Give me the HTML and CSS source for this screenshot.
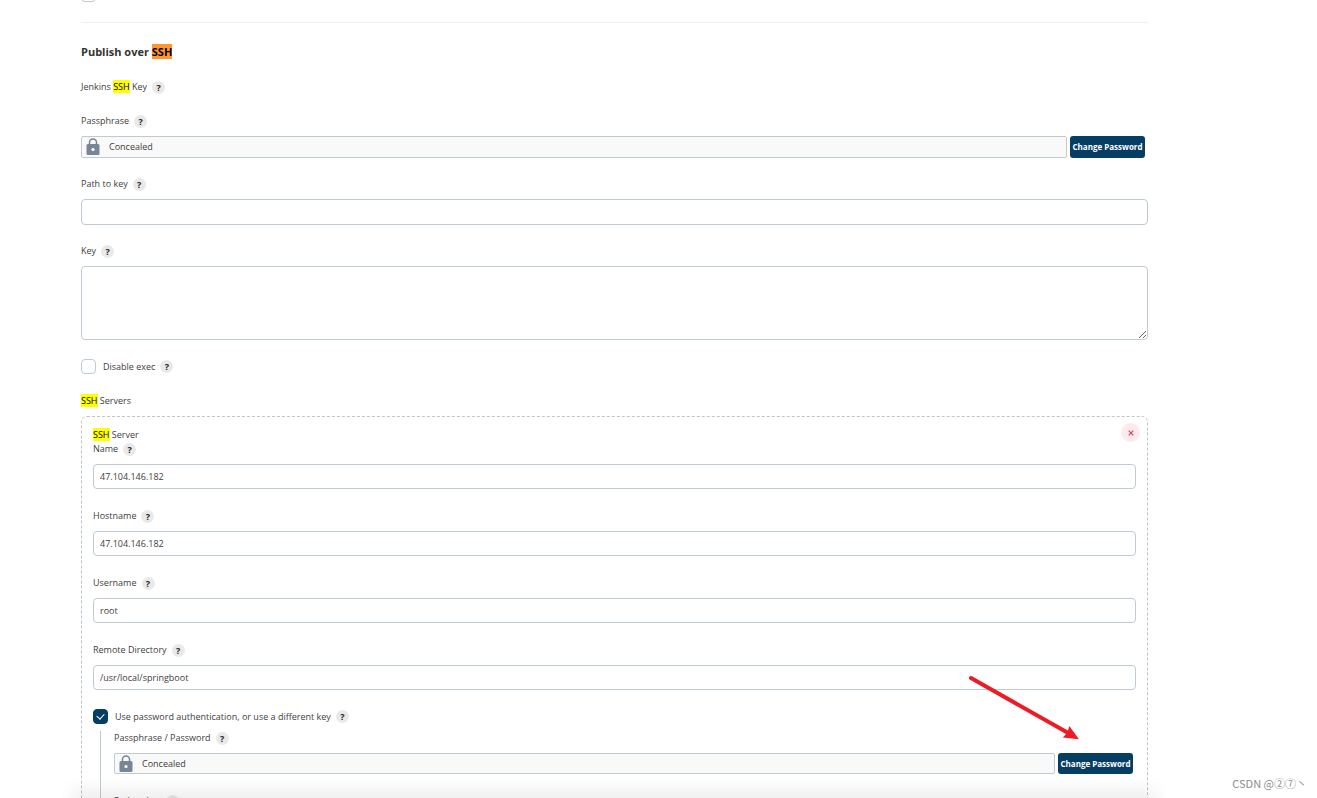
FILE: index.html
```html
<!DOCTYPE html>
<html lang="en">
<head>
<meta charset="utf-8">
<title>Configure System</title>
<link rel="stylesheet" href="styles.css">
</head>
<body>
<svg class="defs" aria-hidden="true">
  <symbol id="lock" viewBox="0 0 14 18">
    <path d="M3.5 8V4.6a3.5 3.5 0 0 1 7 0V8" fill="none" stroke="#788594" stroke-width="1.5"/>
    <rect x="0.5" y="6" width="13" height="11" rx="1.5" fill="#788594"/>
    <circle cx="7" cy="11.5" r="1.6" fill="#fff"/>
  </symbol>
</svg>
<main class="page">
  <form class="config">
    <div class="previous"><input class="check" type="checkbox" aria-label="Previous option"></div>
    <section class="section">
      <h2 class="title">Publish over <mark class="current">SSH</mark></h2>
      <div class="label-row key-title"><span>Jenkins <mark>SSH</mark> Key</span><button type="button" class="help">?</button></div>

      <div class="field">
        <div class="label-row"><span>Passphrase</span><button type="button" class="help">?</button></div>
        <div class="secret">
          <div class="secret-box"><svg class="lock"><use href="#lock"/></svg><span>Concealed</span></div>
          <button type="button" class="change">Change Password</button>
        </div>
      </div>

      <div class="field close">
        <div class="label-row"><label for="path">Path to key</label><button type="button" class="help">?</button></div>
        <input class="text tall" id="path" type="text">
      </div>

      <div class="field close">
        <div class="label-row"><label for="key">Key</label><button type="button" class="help">?</button></div>
        <textarea class="text area" id="key"></textarea>
      </div>

      <div class="check-row">
        <input class="check" id="noexec" type="checkbox"><label for="noexec">Disable exec</label><button type="button" class="help">?</button>
      </div>

      <div class="label-row servers-title"><span><mark>SSH</mark> Servers</span></div>
      <div class="server">
        <button type="button" class="remove" aria-label="Delete"><svg viewBox="0 0 6 6"><path d="M.7.7l4.6 4.6M5.3.7L.7 5.3" stroke="#e0405a" stroke-width="1.2"/></svg></button>
        <div class="label-row"><span><mark>SSH</mark> Server</span></div>
        <div class="field compact">
          <div class="label-row"><label for="name">Name</label><button type="button" class="help">?</button></div>
          <input class="text" id="name" type="text" value="47.104.146.182">
        </div>
        <div class="field">
          <div class="label-row"><label for="host">Hostname</label><button type="button" class="help">?</button></div>
          <input class="text" id="host" type="text" value="47.104.146.182">
        </div>
        <div class="field">
          <div class="label-row"><label for="user">Username</label><button type="button" class="help">?</button></div>
          <input class="text" id="user" type="text" value="root">
        </div>
        <div class="field">
          <div class="label-row"><label for="dir">Remote Directory</label><button type="button" class="help">?</button></div>
          <input class="text" id="dir" type="text" value="/usr/local/springboot">
        </div>
        <div class="check-row">
          <input class="check" id="auth" type="checkbox" checked><label for="auth">Use password authentication, or use a different key</label><button type="button" class="help">?</button>
        </div>
        <div class="nested">
          <div class="label-row"><span>Passphrase / Password</span><button type="button" class="help">?</button></div>
          <div class="secret">
            <div class="secret-box"><svg class="lock"><use href="#lock"/></svg><span>Concealed</span></div>
            <button type="button" class="change">Change Password</button>
          </div>
          <div class="field">
            <div class="label-row"><label for="path2">Path to key</label><button type="button" class="help">?</button></div>
            <input class="text" id="path2" type="text">
          </div>
        </div>
      </div>
    </section>
  </form>
  <div class="bottom-shade"></div>
  <svg class="arrow" viewBox="0 0 112 66" aria-hidden="true">
    <path d="M3 3L102 59" stroke="#ed1c24" stroke-width="4" stroke-linecap="round"/>
    <path d="M111 64.3L101.3 51L99.5 57.5L94.8 62.5Z" fill="#ed1c24"/>
  </svg>
  <div class="watermark">CSDN @②⑦丶</div>
</main>
</body>
</html>
```
FILE: styles.css
```css
* { box-sizing: border-box; }
body {
  margin: 0;
  background: #fff;
  color: #404040;
  font: 9px/14px "Open Sans", "Noto Sans", sans-serif;
}
button, input, textarea { font: inherit; color: inherit; margin: 0; }
.defs { display: none; }
.page { position: relative; height: 100vh; overflow: hidden; }
.config { padding: 0 169px 0 81px; margin-top: -13px; }
.previous { height: 35px; }
.section { border-top: 1px solid #f0f0f0; padding-top: 20px; }
.title { margin: 0; font-size: 11px; line-height: 18px; font-weight: 700; color: #333; }
mark { background: #ff0; color: #000; }
mark.current { background: #ff9632; }

.label-row { display: flex; align-items: center; gap: 5px; height: 14px; }
.key-title { margin-top: 19px; }
.help {
  width: 13px;
  height: 13px;
  padding: 0;
  border: 0;
  border-radius: 50%;
  background: #e9e9e9;
  color: #222;
  font-weight: 700;
  line-height: 13px;
  text-align: center;
}
.field { display: grid; gap: 8px; margin-top: 20px; }
.close { margin-top: 19px; }
.compact { margin-top: 0; }
.text {
  display: block;
  width: 100%;
  height: 25px;
  padding: 0 6px;
  border: 1px solid #bfcbd2;
  border-radius: 4px;
  background: #fff;
}
.tall { height: 26px; }
.area { height: 74px; resize: vertical; }

.secret { display: flex; gap: 3px; padding-right: 3px; }
.secret-box {
  flex: 1;
  display: flex;
  align-items: center;
  gap: 9px;
  height: 22px;
  padding-left: 4px;
  border: 1px solid #bfcbd2;
  border-radius: 2px;
  background: #f9f9f9;
}
.lock { width: 14px; height: 18px; }
.change {
  width: 75px;
  padding: 0;
  border: 0;
  border-radius: 3px;
  background: #063e63;
  color: #fff;
  font-size: 8px;
  font-weight: 700;
  white-space: nowrap;
}

.check-row { display: flex; align-items: center; height: 15px; margin-top: 19px; }
.check-row .help { margin-left: 5px; }
.check-row label { margin-left: 7px; }
.check {
  appearance: none;
  display: block;
  width: 15px;
  height: 15px;
  border: 1px solid #bfcbd2;
  border-radius: 4px;
  background: #fff;
}
.check:checked { border-color: #063e63; background: #063e63; }
.check:checked::before {
  content: "";
  display: block;
  width: 4px;
  height: 6px;
  margin: 2px auto 0;
  border: solid #fff;
  border-width: 0 1px 1px 0;
  transform: rotate(42deg);
}

.servers-title { margin-top: 20px; }
.server {
  position: relative;
  margin-top: 8px;
  padding: 11px 11px 20px;
  border: 1px dashed #bfc5ca;
  border-radius: 6px;
}
.remove {
  position: absolute;
  top: 6px;
  right: 7px;
  display: grid;
  place-items: center;
  width: 19px;
  height: 19px;
  padding: 0;
  border: 0;
  border-radius: 50%;
  background: #fdeaed;
}
.remove svg { width: 6px; height: 6px; }
.nested { margin: 7px 0 0 7px; padding-left: 13px; border-left: 1px solid #bfcbd2; }
.nested .secret { margin-top: 8px; }
.nested .secret-box { height: 21px; }

.bottom-shade {
  position: absolute;
  left: 61px;
  right: 150px;
  bottom: 0;
  height: 20px;
  background: linear-gradient(to bottom, rgba(0, 0, 0, 0), rgba(0, 0, 0, 0.06));
  mask-image: linear-gradient(to right, transparent, #000 24px calc(100% - 24px), transparent);
}
.arrow { position: absolute; left: 968px; top: 675px; width: 112px; height: 66px; }
.watermark {
  position: absolute;
  right: 10px;
  bottom: 7px;
  color: #8c8c8c;
  font: 11px/16px "Noto Sans CJK SC", sans-serif;
}
```
